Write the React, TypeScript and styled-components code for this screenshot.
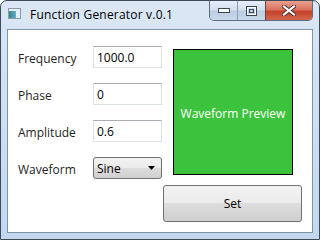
import React from "react";
import styled, { createGlobalStyle } from "styled-components";

const Global = createGlobalStyle`
  html, body { margin: 0; padding: 0; background: #fff; }
  body { font-family: "Segoe UI", "Open Sans", "Noto Sans", sans-serif; font-size: 12px; }
`;

const Frame = styled.div`
  box-sizing: border-box;
  width: 320px;
  height: 240px;
  border: 1px solid #3c4a5a;
  border-radius: 7px 7px 0 0;
  background: linear-gradient(180deg, #dbe7f4 0%, #cfe0f2 40%, #c3d8ee 100%);
  display: flex;
  flex-direction: column;
  overflow: hidden;
`;

const TitleBar = styled.div`
  height: 28px;
  display: flex;
  align-items: flex-start;
  padding-left: 7px;
`;

const AppIcon = styled.svg`
  margin-top: 7px;
  flex: none;
`;

const Title = styled.div`
  margin-left: 9px;
  margin-top: 5px;
  font-size: 12px;
  letter-spacing: 0.2px;
  color: #000;
  flex: 1;
  white-space: nowrap;
`;

const Controls = styled.div`
  display: flex;
  margin-right: 6px;
  height: 19px;
  border: 1px solid #5b6d82;
  border-top: none;
  border-radius: 0 0 5px 5px;
  overflow: hidden;
`;

const CtrlBtn = styled.div<{ $w: number; $close?: boolean }>`
  width: ${(p) => p.$w}px;
  height: 100%;
  display: flex;
  align-items: center;
  justify-content: center;
  border-left: ${(p) => (p.$close ? "1px solid #6b4040" : "1px solid #8b9bb0")};
  background: ${(p) =>
    p.$close
      ? "linear-gradient(180deg, #e8a090 0%, #d9735f 45%, #c4432b 55%, #d0664c 100%)"
      : "linear-gradient(180deg, #e6eef8 0%, #d4e0ee 45%, #bccde2 55%, #c9d8ea 100%)"};
  &:first-child { border-left: none; }
`;

const Client = styled.div`
  flex: 1;
  margin: 0 6px 6px 6px;
  border: 1px solid #7f93a9;
  background: #fff;
  display: flex;
  padding: 16px 0 0 10px;
`;

const Form = styled.div`
  display: grid;
  grid-template-columns: 75px 69px;
  grid-auto-rows: 22px;
  row-gap: 15px;
  align-items: center;
`;

const Label = styled.div`
  color: #1e1e1e;
  font-size: 12px;
  padding-top: 2px;
`;

const TextBox = styled.div`
  box-sizing: border-box;
  height: 22px;
  border: 1px solid #dbdfe6;
  border-top-color: #abadb3;
  padding: 2px 0 0 3px;
  font-size: 12px;
  color: #000;
`;

const Combo = styled.div`
  box-sizing: border-box;
  height: 22px;
  border: 1px solid #707070;
  border-radius: 3px;
  background: linear-gradient(180deg, #f2f2f2 0%, #ebebeb 50%, #dddddd 50%, #cfcfcf 100%);
  display: flex;
  align-items: center;
  justify-content: space-between;
  padding: 0 6px 0 3px;
  font-size: 12px;
  color: #000;
`;

const Right = styled.div`
  display: flex;
  flex-direction: column;
  margin-left: 1px;
  padding-top: 3px;
`;

const Preview = styled.div`
  box-sizing: border-box;
  margin-left: 10px;
  width: 120px;
  height: 126px;
  border: 1px solid #000;
  background: #3cc23c;
  color: #fff;
  display: flex;
  align-items: center;
  justify-content: center;
  font-size: 12px;
  padding-top: 2px;
`;

const SetButton = styled.div`
  box-sizing: border-box;
  margin-top: 10px;
  width: 139px;
  height: 37px;
  border: 1px solid #707070;
  border-radius: 3px;
  background: linear-gradient(180deg, #f2f2f2 0%, #ebebeb 50%, #dddddd 50%, #cfcfcf 100%);
  display: flex;
  align-items: center;
  justify-content: center;
  font-size: 12px;
  color: #000;
`;

export default function App() {
  return (
    <>
      <Global />
      <Frame>
        <TitleBar>
          <AppIcon width="13" height="11" viewBox="0 0 13 11">
            <defs>
              <linearGradient id="ic" x1="0" y1="0" x2="1" y2="0">
                <stop offset="0" stopColor="#2f8f6f" />
                <stop offset="0.5" stopColor="#5aa0c8" />
                <stop offset="1" stopColor="#cfe0ee" />
              </linearGradient>
            </defs>
            <rect x="0.5" y="0.5" width="12" height="10" fill="url(#ic)" stroke="#8a9aab" />
            <rect x="1" y="1" width="11" height="2" fill="#e8eef5" />
            <rect x="8" y="3" width="4" height="7" fill="#e6eef6" />
          </AppIcon>
          <Title>Function Generator v.0.1</Title>
          <Controls>
            <CtrlBtn $w={27}>
              <svg width="12" height="6" viewBox="0 0 12 6">
                <rect x="0.5" y="0.5" width="11" height="4" fill="#fff" stroke="#3a4656" />
              </svg>
            </CtrlBtn>
            <CtrlBtn $w={27}>
              <svg width="11" height="10" viewBox="0 0 11 10">
                <rect x="0.5" y="0.5" width="10" height="9" fill="none" stroke="#3a4656" />
                <rect x="1.5" y="1.5" width="8" height="7" fill="none" stroke="#fff" />
                <rect x="3.5" y="3.5" width="4" height="3" fill="none" stroke="#3a4656" />
              </svg>
            </CtrlBtn>
            <CtrlBtn $w={46} $close>
              <svg width="14" height="11" viewBox="0 0 14 11">
                <path d="M2 1.5 L12 9.5 M12 1.5 L2 9.5" stroke="#4a2a2a" strokeWidth="4" strokeLinecap="square" />
                <path d="M2 1.5 L12 9.5 M12 1.5 L2 9.5" stroke="#fff" strokeWidth="2.2" strokeLinecap="square" />
              </svg>
            </CtrlBtn>
          </Controls>
        </TitleBar>
        <Client>
          <Form>
            <Label>Frequency</Label>
            <TextBox>1000.0</TextBox>
            <Label>Phase</Label>
            <TextBox>0</TextBox>
            <Label>Amplitude</Label>
            <TextBox>0.6</TextBox>
            <Label>Waveform</Label>
            <Combo>
              <span>Sine</span>
              <svg width="7" height="4" viewBox="0 0 7 4">
                <path d="M0 0 H7 L3.5 4 Z" fill="#000" />
              </svg>
            </Combo>
          </Form>
          <Right>
            <Preview>Waveform Preview</Preview>
            <SetButton>Set</SetButton>
          </Right>
        </Client>
      </Frame>
    </>
  );
}
